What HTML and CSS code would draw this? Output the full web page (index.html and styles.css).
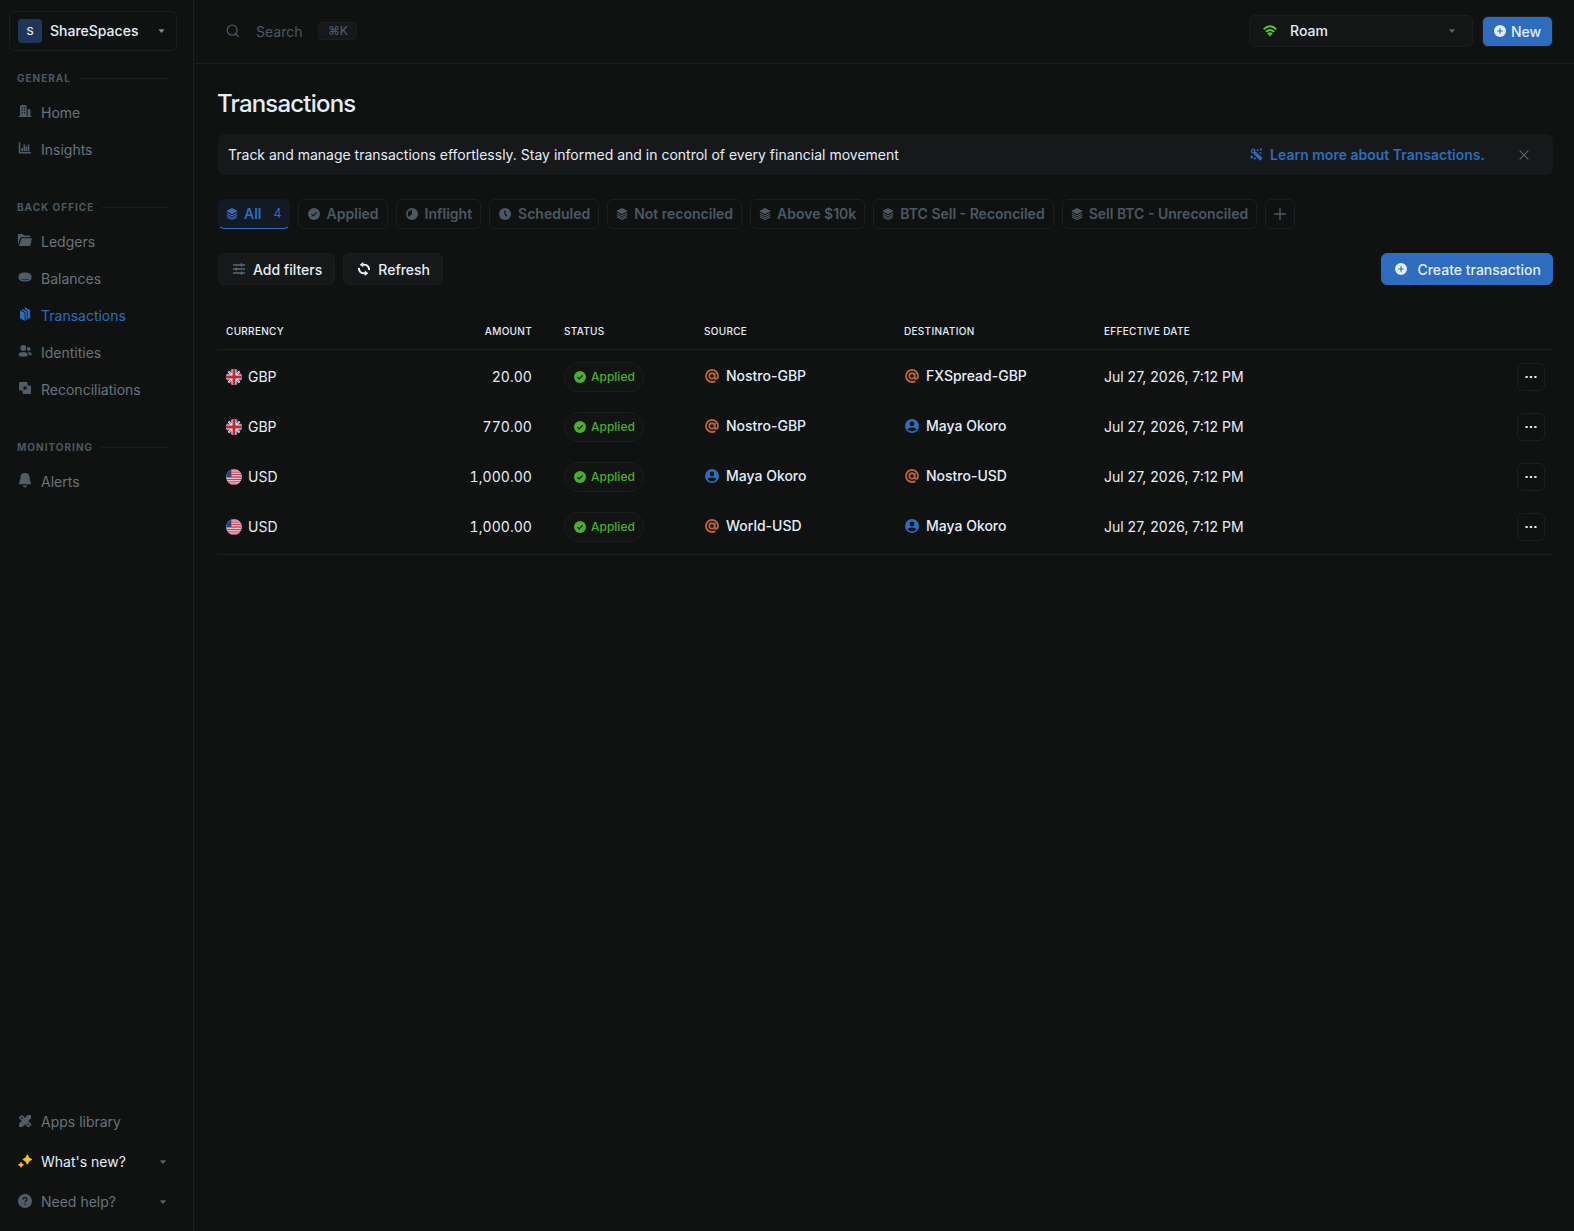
FILE: index.html
```html
<!DOCTYPE html>
<html lang="en">
  <head>
    <meta charset="UTF-8" />
    <meta name="viewport" content="width=device-width, initial-scale=1.0" />
    <title>Transactions</title>
    <link rel="stylesheet" href="styles.css">
  </head>
  <body>
    <svg class="sprite" aria-hidden="true">
      <symbol id="home" viewBox="0 0 14 14">
        <path fill-rule="evenodd" d="M2 12V2.500Q2 1 3.500 1h3.600Q8.600 1 8.600 2.500V12H13.500v1H.5v-1zM3.700 3v1.200h1.200V3zM5.900 3v1.200h1.200V3zM3.700 5.600v1.200h1.200V5.600zM5.900 5.600v1.200h1.200V5.600zM3.700 8.200v1.200h1.200V8.200zM5.900 8.200v1.200h1.200V8.200z" />
        <path d="M9.600 5H11q1.500 0 1.500 1.500V13H9.600z" />
      </symbol>
      <symbol id="insights" viewBox="0 0 14 14">
        <path d="M.8 1.500h1.500v9.400h10.600v1.600H.8zM3.400 7H5v3.300H3.400zM5.500 3.500h1.600v6.800H5.500zM7.600 5.500h1.600v4.800H7.600zM9.700 3.500h1.600v6.800H9.700z" />
      </symbol>
      <symbol id="folder" viewBox="0 0 14 14">
        <path d="M0 12V1.600Q0 1 .6 1h4l1.400 1.600h5.500q.8 0 .8.800v.800H3.300q-.8 0-1.100.8z" />
        <path d="M3.700 5.200h9.600q.6 0 .5.600l-1.400 6.500q-.2.700-.9.700H.9z" />
      </symbol>
      <symbol id="coin" viewBox="0 0 14 14">
        <path fill-rule="evenodd" d="M7 2.500c3.800 0 6.500 1.500 6.500 3.800v1.600c0 2.200-2.800 3.600-6.500 3.600S.5 10.100.5 7.900V6.300C.5 4 3.200 2.500 7 2.500zM2.200 8.800c1 .8 2.800 1.400 4.800 1.400s3.800-.6 4.800-1.400c-1.300.5-3 .8-4.800.8s-3.500-.3-4.800-.8z" />
      </symbol>
      <symbol id="docs" viewBox="0 0 14 14">
        <path d="M2 3.200l4.700 2.700V13.900L2 11.200z" />
        <path d="M4.100 1.700L8.900 4.500v8.200l-1.500.9V5.400L4.100 3.400z" />
        <path d="M6.700.1l5.400 3.100v7.700l-2.500 1.400V4L6.700 2.200z" />
      </symbol>
      <symbol id="people" viewBox="0 0 14 14">
        <circle cx="5.300" cy="4" r="2.900" />
        <circle cx="10.700" cy="5" r="1.900" />
        <path d="M.5 10.800C.5 8.900 2.600 7.900 5.200 7.900s4.700 1 4.700 2.900-2 1.900-4.700 1.900-4.700 0-4.700-1.900z" />
        <path d="M10.400 7.900c1.900 0 3.300.8 3.300 2.200 0 1-.9 1.400-2.700 1.400.1-1.500-.1-2.600-1.600-3.500z" />
      </symbol>
      <symbol id="recon" viewBox="0 0 14 14">
        <rect x="1" y="1" width="8.500" height="8.500" rx="1.300" />
        <rect x="4.500" y="4.500" width="8.500" height="8.500" rx="1.300" />
        <rect x="5.500" y="5.500" width="3" height="3" fill="#101211" />
      </symbol>
      <symbol id="bell" viewBox="0 0 14 15">
        <path d="M7 0c3 0 4.700 2 4.700 4.700 0 3 .7 3.600 1.300 5v1.500H1V9.700c.6-1.400 1.300-2 1.300-5C2.300 2 4 0 7 0zM4.600 12.500h4.800Q8.700 14.500 7 14.500t-2.400-2z" />
      </symbol>
      <symbol id="tools" viewBox="0 0 14 14">
        <path d="M9.700 1h3.300v3.300L4.300 13H1V9.700z" />
        <path d="M1.800 3.900l2.100-2.100 2.300 2.300-2.100 2.100zM7.900 10l2.100-2.100 2.500 2.500-2.100 2.100z" fill="none" stroke="currentColor" stroke-width="1.600" stroke-linejoin="round" />
      </symbol>
      <symbol id="sparkles" viewBox="0 0 14 14">
        <path d="M9.300.7l1.500 3 3 1.800-3 1.800-1.500 3-1.500-3-3-1.800 3-1.800zM3 8.300l.9 1.600 1.600.9-1.600.9L3 13.300l-.9-1.600-1.600-.9 1.600-.9z" stroke="currentColor" stroke-width=".8" stroke-linejoin="round" />
      </symbol>
      <symbol id="help" viewBox="0 0 14 14">
        <circle cx="7" cy="7" r="7" />
        <path d="M5.100 5.500c0-2.500 3.900-2.400 3.900-.1C9 6.900 7.100 6.800 7.100 8.300M7.100 9.600v1.300" fill="none" stroke="#101211" stroke-width="1.200" />
      </symbol>
      <symbol id="caret" viewBox="0 0 6 4">
        <path d="M.7.300h4.600q.7.200.3.700L3.500 3.500q-.5.500-1 0L.4 1Q0 .5.700.300z" />
      </symbol>
      <symbol id="search" viewBox="0 0 14 14">
        <g fill="none" stroke="currentColor" stroke-width="1.300" stroke-linecap="round">
          <circle cx="6.200" cy="6.200" r="5" />
          <path d="M9.900 9.900L12.300 12.300" />
        </g>
      </symbol>
      <symbol id="wifi" viewBox="0 0 14 12">
        <g fill="none" stroke="currentColor" stroke-width="1.900">
          <path d="M.7 4.300Q7-1.600 13.300 4.300M2.900 6.900Q7 3.100 11.100 6.900M4.800 9.300Q7 7.300 9.200 9.300" />
        </g>
        <path d="M5.500 9.600h3L7 11.800z" />
      </symbol>
      <symbol id="plus-circle" viewBox="0 0 12 12">
        <path fill-rule="evenodd" d="M6 0a6 6 0 1 1 0 12A6 6 0 0 1 6 0zM5.400 3.300v2.100H3.300v1.200h2.100v2.100h1.200V6.600h2.100V5.400H6.600V3.300z" />
      </symbol>
      <symbol id="wand" viewBox="0 0 14 14">
        <path d="M5.600 3.500l8 7.400-2.700 2.900L3.400 6z" />
        <path d="M3.200 1.200a1.800 1.800 0 0 1 2 2L3.400 5.100a1.800 1.800 0 0 1-2-2z" fill="none" stroke="currentColor" stroke-width="1.300" />
        <path d="M8.200 1l1.300 1.300-1.300 1.300L6.900 2.300zM11.700.1l1.400 1.400-1.400 1.400-1.400-1.400zM11.200 4l1.300 1.300-1.300 1.300L9.900 5.300zM1.900 7.900l1.800 1.800-1.800 1.800L.1 9.700zM5.200 9.700l1.500 1.500-1.500 1.500-1.500-1.500z" />
      </symbol>
      <symbol id="close" viewBox="0 0 10 10">
        <path d="M.7.700l8.600 8.600M9.300.7L.7 9.300" fill="none" stroke="currentColor" stroke-width="1.200" />
      </symbol>
      <symbol id="layers" viewBox="0 0 12 12">
        <path d="M6 0l5.300 2.700v.7L6 6 .7 3.400v-.7z" />
        <path d="M.9 5.200L6 7.700l5.100-2.500M.9 7.200L6 9.700l5.100-2.500M.9 9L6 11.500 11.100 9" fill="none" stroke="currentColor" stroke-width="1.050" />
      </symbol>
      <symbol id="check" viewBox="0 0 12 12">
        <circle cx="6" cy="6" r="6" />
        <path d="M3.500 6.100l1.800 1.800 3.300-3.500" fill="none" stroke="#101211" stroke-width="1.200" />
      </symbol>
      <symbol id="inflight" viewBox="0 0 12 12">
        <path fill-rule="evenodd" d="M6 0a6 6 0 1 1 0 12A6 6 0 0 1 6 0zM6 1.700A4.300 4.300 0 0 0 2.900 9L6 6z" />
      </symbol>
      <symbol id="clock" viewBox="0 0 12 12">
        <circle cx="6" cy="6" r="6" />
        <path d="M6 2.500v3.700l2 2" fill="none" stroke="#101211" stroke-width="1.300" />
      </symbol>
      <symbol id="plus" viewBox="0 0 12 12">
        <path d="M6 .3v11.400M.3 6h11.400" fill="none" stroke="currentColor" stroke-width="1.500" />
      </symbol>
      <symbol id="filters" viewBox="0 0 12 12">
        <path d="M0 1.900h12M0 6h12M0 10.100h12M8.500.3v3.200M3.300 4.400v3.200M8.500 8.500v3.200" fill="none" stroke="currentColor" stroke-width="1.500" />
      </symbol>
      <symbol id="refresh" viewBox="0 0 14 14">
        <path d="M4.800 2.800H7.500A4.600 4.600 0 0 1 12 8.200M9.200 11.200H6.500A4.600 4.600 0 0 1 2 5.800" fill="none" stroke="currentColor" stroke-width="2" />
        <path d="M2.700 2.800L6.200 0v5.600zM11.300 11.200L7.800 14V8.400z" />
      </symbol>
      <symbol id="gb" viewBox="0 0 16 16">
        <circle cx="8" cy="8" r="8" fill="#1f3c82" />
        <path d="M2.300 2.300l11.400 11.400M13.700 2.300L2.300 13.700" stroke="#f3f3f6" stroke-width="1.900" />
        <path d="M2.300 2.300l11.400 11.400M13.700 2.300L2.300 13.700" stroke="#c8343c" stroke-width=".6" />
        <path d="M8 0v16M0 8h16" stroke="#f3f3f6" stroke-width="5" />
        <path d="M8 0v16M0 8h16" stroke="#c5262f" stroke-width="3" />
      </symbol>
      <symbol id="us" viewBox="0 0 16 16">
        <circle cx="8" cy="8" r="8" fill="#f0e8ec" />
        <path d="M4.500.8h7M2.200 3.100h11.600M.8 5.500h14.400M.1 8h15.800M.6 10.500h14.800M2 12.900h12M4.500 15.200h7" stroke="#c5405a" stroke-width="1.350" />
        <path d="M5.300.5V8H0A8 8 0 0 1 5.300.5z" fill="#28457e" />
      </symbol>
      <symbol id="at" viewBox="0 0 14 14">
        <path d="M9.700 4v4.200c0 2.300 3.300 2.100 3.300-1.200A6 6 0 1 0 7 13c1.400 0 2.400-.3 3.400-.9M9.700 7A2.700 2.700 0 1 1 4.300 7a2.700 2.700 0 0 1 5.400 0z" fill="none" stroke="currentColor" stroke-width="1.900" />
      </symbol>
      <symbol id="user" viewBox="0 0 14 14">
        <path fill-rule="evenodd" d="M7 0a7 7 0 1 1 0 14A7 7 0 0 1 7 0zM7 2.600a2.300 2.300 0 1 0 0 4.600 2.300 2.300 0 0 0 0-4.600zM7 8.400c-2.100 0-3.800.8-4.200 1.800C3.600 11.500 5.200 12.300 7 12.300s3.400-.8 4.200-2.100C10.800 9.200 9.100 8.400 7 8.400z" />
      </symbol>
      <symbol id="dots" viewBox="0 0 12 4">
        <path d="M.5 1h2.200v2H.5zM4.900 1h2.200v2H4.900zM9.300 1h2.200v2H9.300z" />
      </symbol>
    </svg>

    <div class="app">
      <aside class="sidebar">
        <button class="workspace">
          <span class="workspace-avatar">S</span>
          <span class="workspace-name">ShareSpaces</span>
          <svg class="caret"><use href="#caret" /></svg>
        </button>

        <nav class="nav">
          <section class="nav-section">
            <h2 class="nav-label">General</h2>
            <a class="nav-item"><svg class="icon"><use href="#home" /></svg>Home</a>
            <a class="nav-item"><svg class="icon"><use href="#insights" /></svg>Insights</a>
          </section>
          <section class="nav-section">
            <h2 class="nav-label">Back office</h2>
            <a class="nav-item"><svg class="icon"><use href="#folder" /></svg>Ledgers</a>
            <a class="nav-item"><svg class="icon"><use href="#coin" /></svg>Balances</a>
            <a class="nav-item is-active"><svg class="icon"><use href="#docs" /></svg>Transactions</a>
            <a class="nav-item"><svg class="icon"><use href="#people" /></svg>Identities</a>
            <a class="nav-item"><svg class="icon"><use href="#recon" /></svg>Reconciliations</a>
          </section>
          <section class="nav-section">
            <h2 class="nav-label">Monitoring</h2>
            <a class="nav-item"><svg class="icon icon-bell"><use href="#bell" /></svg>Alerts</a>
          </section>
        </nav>

        <div class="nav-bottom">
          <a class="nav-item"><svg class="icon"><use href="#tools" /></svg>Apps library</a>
          <a class="nav-item is-new"><svg class="icon"><use href="#sparkles" /></svg>What's new?<svg class="caret"><use href="#caret" /></svg></a>
          <a class="nav-item"><svg class="icon"><use href="#help" /></svg>Need help?<svg class="caret"><use href="#caret" /></svg></a>
        </div>
      </aside>

      <div class="page">
        <header class="topbar">
          <div class="search">
            <svg class="icon-search"><use href="#search" /></svg>
            <span class="search-text">Search</span>
            <kbd class="search-key">⌘K</kbd>
          </div>
          <button class="env">
            <svg class="icon-wifi"><use href="#wifi" /></svg>
            <span>Roam</span>
            <svg class="caret"><use href="#caret" /></svg>
          </button>
          <button class="btn-new"><svg class="icon-sm"><use href="#plus-circle" /></svg><span>New</span></button>
        </header>

        <main class="content">
          <h1 class="title">Transactions</h1>

          <div class="banner">
            <p class="banner-text">Track and manage transactions effortlessly. Stay informed and in control of every financial movement</p>
            <a class="banner-link"><svg class="icon-wand"><use href="#wand" /></svg><span>Learn more about Transactions.</span></a>
            <svg class="icon-close"><use href="#close" /></svg>
          </div>

          <div class="tabs">
            <button class="tab is-active"><svg class="icon-layers"><use href="#layers" /></svg>All<span class="tab-count">4</span></button>
            <button class="tab is-status"><svg class="icon-sm"><use href="#check" /></svg>Applied</button>
            <button class="tab is-status"><svg class="icon-sm"><use href="#inflight" /></svg>Inflight</button>
            <button class="tab is-status"><svg class="icon-sm"><use href="#clock" /></svg>Scheduled</button>
            <button class="tab"><svg class="icon-layers"><use href="#layers" /></svg>Not reconciled</button>
            <button class="tab"><svg class="icon-layers"><use href="#layers" /></svg>Above $10k</button>
            <button class="tab"><svg class="icon-layers"><use href="#layers" /></svg>BTC Sell - Reconciled</button>
            <button class="tab"><svg class="icon-layers"><use href="#layers" /></svg>Sell BTC - Unreconciled</button>
            <button class="tab is-add" aria-label="Add view"><svg class="icon-sm"><use href="#plus" /></svg></button>
          </div>

          <div class="toolbar">
            <button class="btn"><svg class="icon-sm icon-filters"><use href="#filters" /></svg><span>Add filters</span></button>
            <button class="btn is-refresh"><svg class="icon-refresh"><use href="#refresh" /></svg><span>Refresh</span></button>
            <button class="btn is-primary"><svg class="icon-sm"><use href="#plus-circle" /></svg><span>Create transaction</span></button>
          </div>

          <div class="table">
            <div class="row table-head">
              <span>Currency</span>
              <span class="amount">Amount</span>
              <span>Status</span>
              <span>Source</span>
              <span>Destination</span>
              <span>Effective date</span>
            </div>
            <div class="table-body">
              <div class="row">
                <span class="currency"><svg class="flag"><use href="#gb" /></svg>GBP</span>
                <span class="amount">20.00</span>
                <span><span class="pill"><svg class="icon-sm"><use href="#check" /></svg>Applied</span></span>
                <span class="party"><svg class="icon is-at"><use href="#at" /></svg>Nostro-GBP</span>
                <span class="party"><svg class="icon is-at"><use href="#at" /></svg>FXSpread-GBP</span>
                <span class="date">Jul 27, 2026, 7:12 PM</span>
                <button class="more" aria-label="More"><svg><use href="#dots" /></svg></button>
              </div>
              <div class="row">
                <span class="currency"><svg class="flag"><use href="#gb" /></svg>GBP</span>
                <span class="amount">770.00</span>
                <span><span class="pill"><svg class="icon-sm"><use href="#check" /></svg>Applied</span></span>
                <span class="party"><svg class="icon is-at"><use href="#at" /></svg>Nostro-GBP</span>
                <span class="party"><svg class="icon is-user"><use href="#user" /></svg>Maya Okoro</span>
                <span class="date">Jul 27, 2026, 7:12 PM</span>
                <button class="more" aria-label="More"><svg><use href="#dots" /></svg></button>
              </div>
              <div class="row">
                <span class="currency"><svg class="flag"><use href="#us" /></svg>USD</span>
                <span class="amount">1,000.00</span>
                <span><span class="pill"><svg class="icon-sm"><use href="#check" /></svg>Applied</span></span>
                <span class="party"><svg class="icon is-user"><use href="#user" /></svg>Maya Okoro</span>
                <span class="party"><svg class="icon is-at"><use href="#at" /></svg>Nostro-USD</span>
                <span class="date">Jul 27, 2026, 7:12 PM</span>
                <button class="more" aria-label="More"><svg><use href="#dots" /></svg></button>
              </div>
              <div class="row">
                <span class="currency"><svg class="flag"><use href="#us" /></svg>USD</span>
                <span class="amount">1,000.00</span>
                <span><span class="pill"><svg class="icon-sm"><use href="#check" /></svg>Applied</span></span>
                <span class="party"><svg class="icon is-at"><use href="#at" /></svg>World-USD</span>
                <span class="party"><svg class="icon is-user"><use href="#user" /></svg>Maya Okoro</span>
                <span class="date">Jul 27, 2026, 7:12 PM</span>
                <button class="more" aria-label="More"><svg><use href="#dots" /></svg></button>
              </div>
            </div>
          </div>
        </main>
      </div>
    </div>
  </body>
</html>
```
FILE: styles.css
```css
:root {
  --bg: #101211;
  --surface: #161819;
  --line: #1b1d1f;
  --text: #e4eefb;
  --nav: #68737c;
  --muted: #4b5863;
  --blue: #2d6cbe;
  --green: #4cad2e;
  --orange: #b8623a;
}

*,
*::before,
*::after {
  box-sizing: border-box;
  margin: 0;
  padding: 0;
}

body {
  font-family: Inter, "Liberation Sans", sans-serif;
  font-size: 14px;
  line-height: 20px;
  color: var(--text);
  background-color: var(--bg);
}

button {
  font: inherit;
  color: inherit;
  background: none;
  border: 1px solid var(--line);
  border-radius: 6px;
  display: flex;
  align-items: center;
}

svg {
  fill: currentColor;
  flex: none;
}

.sprite {
  display: none;
}

.icon {
  width: 14px;
  height: 14px;
}

.icon-sm {
  width: 12px;
  height: 12px;
}

.caret {
  width: 6px;
  height: 4px;
  color: #56636f;
  margin-left: auto;
}

.app {
  display: flex;
  height: 100vh;
}

/* sidebar */

.sidebar {
  width: 194px;
  flex: none;
  border-right: 1px solid var(--line);
  padding: 11px 16px 9px 9px;
  display: flex;
  flex-direction: column;
}

.workspace {
  height: 40px;
  padding: 0 11px 0 8px;
  font-weight: 500;
}

.workspace .caret {
  width: 7px;
  color: #7b8798;
}

.workspace-avatar {
  width: 24px;
  height: 24px;
  border-radius: 4px;
  background-color: #20355a;
  font-size: 11px;
  line-height: 25px;
  text-align: center;
  margin-right: 8px;
}

.nav {
  display: flex;
  flex-direction: column;
  gap: 31px;
  padding: 19px 8px 0;
}

.nav-label {
  display: flex;
  align-items: center;
  gap: 8px;
  height: 16px;
  margin-bottom: 8px;
  font-size: 10px;
  font-weight: 700;
  letter-spacing: 1px;
  text-transform: uppercase;
  color: var(--muted);
}

.nav-label::after {
  content: "";
  flex: 1;
  height: 1px;
  background-color: var(--line);
}

.nav-item {
  display: flex;
  align-items: center;
  gap: 9px;
  height: 37px;
  padding-left: 1px;
  color: var(--nav);
}

.nav-item .icon {
  color: #4f5d68;
  margin-bottom: 4px;
}

.nav-item .icon-bell {
  height: 15px;
  margin-bottom: 2px;
}

.nav-item.is-active,
.nav-item.is-active .icon {
  color: var(--blue);
}

.nav-bottom {
  margin-top: auto;
  padding: 0 11px 0 8px;
}

.nav-bottom .nav-item {
  height: 40px;
}

.nav-bottom .icon {
  margin-bottom: 2px;
}

.nav-item.is-new {
  color: var(--text);
}

.nav-item.is-new .icon {
  color: #fcc32c;
}

/* top bar */

.page {
  flex: 1;
  min-width: 0;
}

.topbar {
  display: flex;
  align-items: center;
  height: 64px;
  padding: 0 21px 2px 32px;
  border-bottom: 1px solid var(--line);
}

.search {
  display: flex;
  align-items: center;
  flex: 1;
  color: var(--muted);
}

.icon-search {
  width: 14px;
  height: 14px;
}

.search-text {
  margin: 2px 16px 0;
}

.search-key {
  width: 39px;
  height: 18px;
  border: 1px solid var(--line);
  border-radius: 3px;
  background-color: var(--surface);
  font: 500 12px/16px Inter, "DejaVu Sans", sans-serif;
  text-align: center;
}

.env {
  width: 224px;
  height: 32px;
  padding: 0 17px 0 13px;
  background-color: #141616;
  font-weight: 500;
}

.icon-wifi {
  width: 14px;
  height: 12px;
  margin-right: 13px;
  color: #56c53a;
}

.btn-new {
  width: 71px;
  height: 31px;
  margin: 1px 0 0 9px;
  padding: 0 0 0 11px;
  gap: 5px;
  background-color: var(--blue);
  font-weight: 500;
}

.btn-new span {
  margin-top: 1px;
}

/* content */

.content {
  padding: 23px 21px 0 24px;
}

.title {
  margin-left: -1px;
  padding-top: 1px;
  font-size: 24px;
  font-weight: 500;
  line-height: 32px;
  letter-spacing: -0.8px;
}

.banner {
  display: flex;
  align-items: center;
  height: 41px;
  margin-top: 14px;
  padding: 0 24px 0 10px;
  border-radius: 6px;
  background-color: var(--surface);
}

.banner-text {
  flex: 1;
}

.banner-link {
  display: flex;
  align-items: center;
  gap: 7px;
  font-weight: 600;
  color: var(--blue);
}

.icon-wand {
  width: 13px;
  height: 13px;
}

.icon-close {
  width: 10px;
  height: 10px;
  margin-left: 34px;
  color: #59656e;
}

.tabs {
  display: flex;
  gap: 8px;
  margin-top: 24px;
}

.tab {
  height: 30px;
  padding: 0 8px;
  font-weight: 600;
  color: var(--muted);
}

.tab svg {
  margin-right: 7px;
}

.tab .icon-layers {
  width: 12px;
  height: 12px;
  margin-right: 6px;
}

.tab.is-status {
  padding-left: 9px;
}

.tab.is-active {
  padding: 0 7px;
  color: var(--blue);
  background-color: #131a23;
  border-color: #131a23;
  border-bottom-color: var(--blue);
}

.tab-count {
  margin-left: 12px;
  font-size: 12.5px;
  font-weight: 400;
}

.tab.is-add {
  width: 30px;
  padding: 0;
  justify-content: center;
}

.tab.is-add svg {
  margin: 0;
}

.toolbar {
  display: flex;
  gap: 8px;
  margin-top: 24px;
}

.btn {
  height: 32px;
  padding: 1px 12px 0 14px;
  gap: 8px;
  background-color: var(--surface);
  font-weight: 500;
}

.btn svg {
  margin-bottom: 2px;
}

.btn.is-refresh {
  padding-left: 13px;
  gap: 7px;
}

.btn.is-primary {
  margin-left: auto;
  padding: 1px 11px 0 13px;
  gap: 10px;
  background-color: var(--blue);
  border-color: var(--blue);
}

.icon-filters {
  color: #5b6872;
}

.icon-refresh {
  width: 14px;
  height: 14px;
}

/* transactions table */

.table {
  margin-top: 28px;
  border-bottom: 1px solid var(--line);
}

.row {
  display: grid;
  grid-template-columns: 200px 122px 156px 200px 200px 200px 1fr;
  align-items: center;
  height: 50px;
}

.row > * {
  margin: 0 8px;
}

.row > .amount {
  text-align: right;
}

.row > :nth-child(3) {
  margin-left: 24px;
}

.table-head {
  height: 37px;
  border-bottom: 1px solid var(--line);
  font-size: 10px;
  font-weight: 500;
  letter-spacing: 0.3px;
  text-transform: uppercase;
}

.table-body {
  padding: 2px 0;
}

.currency,
.party {
  display: flex;
  align-items: center;
  gap: 6px;
}

.flag {
  width: 16px;
  height: 16px;
  border-radius: 50%;
}

.table-body .amount {
  font-variant-numeric: tabular-nums;
  letter-spacing: 0.05px;
}

.pill {
  display: flex;
  align-items: center;
  gap: 5px;
  width: 80px;
  height: 30px;
  padding-left: 9px;
  border: 1px solid var(--line);
  border-radius: 15px;
  background-color: #121413;
  font-size: 12px;
  font-weight: 500;
  color: var(--green);
}

.party {
  gap: 7px;
  padding: 0 0 2px 1px;
  font-weight: 500;
}

.is-at {
  color: var(--orange);
}

.is-user {
  color: var(--blue);
}

.more {
  width: 28px;
  height: 28px;
  justify-self: end;
  justify-content: center;
}

.more svg {
  width: 12px;
  height: 4px;
}
```
